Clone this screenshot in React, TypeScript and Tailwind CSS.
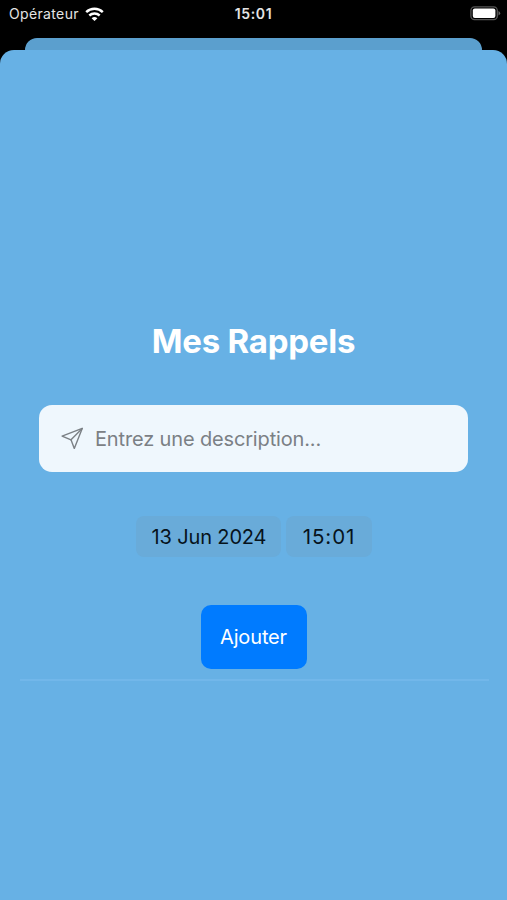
function StatusBar() {
  return (
    <header className="grid h-[38px] grid-cols-3 items-start px-[9px] pt-[4px] text-[14px] leading-[20px] text-[#e4e4e4]">
      <div className="flex items-center gap-[6px]">
        <span className="tracking-[0.35px]">Opérateur</span>
        <svg width="19" height="15" viewBox="0 0 19 15" fill="none" stroke="#fff">
          <path d="M1.2 5.1C5.9 .7 13.1 .7 17.8 5.1" strokeWidth="2.5" />
          <path d="M4.3 8.5C7.3 5.8 11.7 5.8 14.7 8.5" strokeWidth="2.4" />
          <path d="M6.6 11.2Q9.5 8.7 12.4 11.2L9.5 14.1Z" fill="#fff" stroke="none" />
        </svg>
      </div>
      <span className="text-center font-semibold tracking-[0.6px]">15:01</span>
      <svg className="mt-[2px] -mr-[3px] justify-self-end" width="31" height="15" viewBox="0 0 31 15">
        <rect x=".9" y=".9" width="26.4" height="12.8" rx="3.6" fill="#000" stroke="#555" strokeWidth="1.3" />
        <rect x="2.8" y="2.6" width="22.6" height="9.4" rx="2" fill="#fff" />
        <path d="M28.5 4.9Q30.2 5.6 30.2 7.2T28.5 9.5Z" fill="#666" />
      </svg>
    </header>
  );
}

export default function App() {
  return (
    <div className="flex h-[900px] w-[507px] flex-col overflow-hidden bg-black font-['Inter','Liberation_Sans',sans-serif]">
      <StatusBar />
      <div className="mx-[25px] h-[12px] shrink-0 rounded-t-[12px] bg-[#5b9fce]" />
      <main className="flex flex-1 flex-col items-center rounded-t-[14px] bg-[#67b1e5]">
        <h1 className="mt-[270px] text-[33px] leading-[42px] font-bold tracking-[-0.25px] whitespace-nowrap text-white">Mes Rappels</h1>
        <div className="mt-[43px] flex h-[67px] w-[429px] items-center rounded-[13px] bg-[#eff7fd] pl-[22px] text-[#7b8085]">
          <svg width="23" height="23" viewBox="0 0 23 23" fill="none" stroke="currentColor" strokeWidth="1.4" strokeLinejoin="round" strokeLinecap="round">
            <path d="M21.2 1.4L1.1 9.1L10 12.8L13.3 21.4Z" />
            <path d="M21.2 1.4L10 12.8" />
          </svg>
          <span className="ml-[11px] text-[20px] leading-[28px] tracking-[-0.15px]">Entrez une description...</span>
        </div>
        <div className="mt-[44px] flex h-[41px] gap-[5px] text-[20px] leading-[42px] text-[#07131c]">
          <span className="w-[145px] rounded-[8px] bg-[#69abd9] pl-[2px] text-center tracking-[-0.15px]">13 Jun 2024</span>
          <span className="w-[86px] rounded-[8px] bg-[#69abd9] pl-px text-center text-[20.5px] tracking-[0.9px]">15:01</span>
        </div>
        <button className="mt-[48px] h-[64px] w-[106px] rounded-[10px] bg-[#007bff] text-[20px] tracking-[-0.15px] text-white">Ajouter</button>
        <hr className="mt-[10px] ml-px h-[2px] w-[469px] border-0 bg-[#72b7ea]" />
      </main>
    </div>
  );
}
